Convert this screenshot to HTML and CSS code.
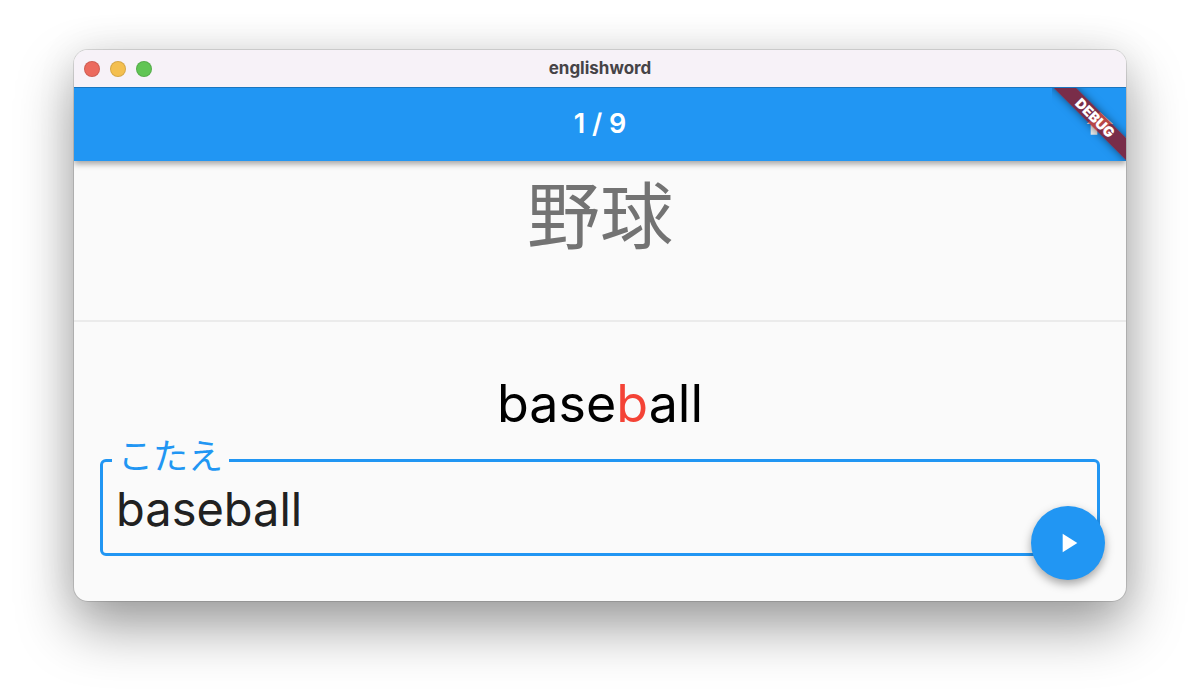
FILE: index.html
```
<!DOCTYPE html>
<html lang="ja">
<head>
<meta charset="utf-8">
<title>englishword</title>
<link rel="stylesheet" href="styles.css">
</head>
<body>
<main class="window">
  <header class="titlebar">
    <div class="lights">
      <button class="light light-close" type="button" aria-label="Close"></button>
      <button class="light light-minimize" type="button" aria-label="Minimize"></button>
      <button class="light light-zoom" type="button" aria-label="Zoom"></button>
    </div>
    <div class="window-title">englishword</div>
  </header>
  <div class="appbar">
    <h1 class="progress">1 / 9</h1>
    <button class="home" type="button" aria-label="Home">
      <svg viewBox="0 0 24 24" width="32" height="32" aria-hidden="true"><path fill="currentColor" d="M10 20v-6h4v6h5v-8h3L12 3 2 12h3v8z"/></svg>
    </button>
    <div class="debug-corner"><span class="debug-banner">DEBUG</span></div>
  </div>
  <section class="question">野球</section>
  <section class="answer">
    <p class="word">base<span class="miss">b</span>all</p>
    <fieldset class="field">
      <legend class="field-legend"><label for="answer">こたえ</label></legend>
      <input class="field-input" id="answer" type="text" value="baseball" autocomplete="off" spellcheck="false">
    </fieldset>
  </section>
  <button class="fab" type="button" aria-label="Play">
    <svg viewBox="0 0 24 24" width="32" height="32" aria-hidden="true"><path fill="currentColor" d="M8 5v14l11-7z"/></svg>
  </button>
</main>
</body>
</html>
```
FILE: styles.css
```
* {
  box-sizing: border-box;
}

body {
  margin: 0;
  padding: 50px 74px 98px;
  min-height: 100vh;
  display: flex;
  background: #fff;
  font-family: Inter, "Noto Sans CJK JP", sans-serif;
}

.window {
  position: relative;
  flex: 1;
  display: flex;
  flex-direction: column;
  border-radius: 14px;
  background: #fafafa;
  box-shadow: 0 0 0 1px rgba(0, 0, 0, 0.12), 0 26px 56px rgba(0, 0, 0, 0.38), 0 0 40px rgba(0, 0, 0, 0.08);
}

.titlebar {
  display: grid;
  grid-template-columns: 1fr auto 1fr;
  align-items: center;
  height: 37px;
  padding: 0 10px;
  border-radius: 14px 14px 0 0;
  background: #f7f2f8;
}

.lights {
  display: flex;
  gap: 10px;
}

.light {
  width: 16px;
  height: 16px;
  padding: 0;
  border: 1px solid rgba(0, 0, 0, 0.12);
  border-radius: 50%;
}

.light-close {
  background: #ec6a5e;
}

.light-minimize {
  background: #f4bf4f;
}

.light-zoom {
  background: #61c554;
}

.window-title {
  padding-bottom: 2px;
  color: #464347;
  font-size: 17px;
  font-weight: 700;
}

.appbar {
  position: relative;
  display: grid;
  grid-template-columns: 1fr auto 1fr;
  align-items: center;
  height: 74px;
  padding: 0 10px 2px;
  border-top: 1px solid #1a76c0;
  background: #2196f3;
  box-shadow: 0 3px 6px rgba(0, 0, 0, 0.35);
  clip-path: inset(0 0 -12px 0);
  color: #fff;
}

.progress {
  grid-column: 2;
  margin: 0;
  font-size: 27px;
  font-weight: 600;
}

.home {
  justify-self: end;
  display: flex;
  padding: 0;
  border: 0;
  background: none;
  color: #eee;
}

.debug-corner {
  position: absolute;
  inset: 0 0 0 auto;
  width: 74px;
  overflow: hidden;
}

.debug-banner {
  position: absolute;
  top: 22px;
  left: -12px;
  width: 110px;
  transform: rotate(45deg);
  background: rgba(160, 0, 0, 0.7);
  box-shadow: 0 0 8px rgba(0, 0, 0, 0.5);
  font-size: 14px;
  font-weight: 900;
  line-height: 16px;
  text-align: center;
}

.question {
  height: 161px;
  padding-top: 2px;
  border-bottom: 2px solid #ebebeb;
  color: #737373;
  font-family: "Noto Sans CJK JP", sans-serif;
  font-size: 73px;
  line-height: 96px;
  text-align: center;
}

.answer {
  padding: 50px 26px 45px;
}

.word {
  margin: 0;
  color: #000;
  font-size: 52px;
  line-height: 64px;
  text-align: center;
}

.miss {
  color: #f44336;
}

.field {
  margin: 0;
  padding: 0 13px 20px;
  min-width: 0;
  border: 3px solid #2196f3;
  border-radius: 6px;
}

.field-legend {
  margin-left: -4px;
  padding: 0 6px 8px;
  color: #2196f3;
  font-size: 35px;
  line-height: 40px;
}

.field-input {
  display: block;
  width: 100%;
  height: 49px;
  padding: 0;
  border: 0;
  outline: 0;
  background: none;
  color: #212121;
  font-family: inherit;
  font-size: 47px;
  line-height: 49px;
}

.fab {
  position: absolute;
  right: 21px;
  bottom: 21px;
  display: flex;
  align-items: center;
  justify-content: center;
  width: 74px;
  height: 74px;
  padding: 0;
  border: 0;
  border-radius: 50%;
  background: #2196f3;
  box-shadow: 0 4px 10px rgba(0, 0, 0, 0.35);
  color: #fff;
}
```
